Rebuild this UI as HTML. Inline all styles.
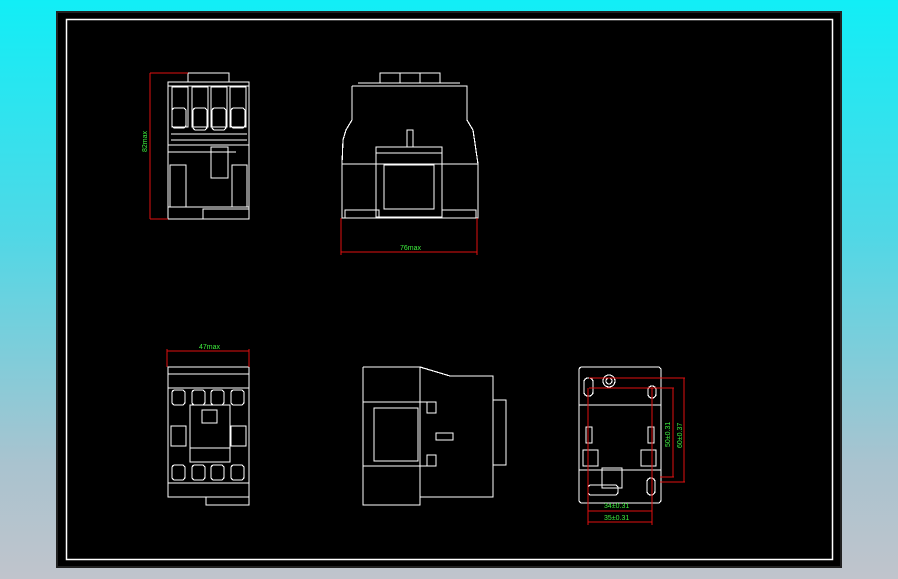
<!DOCTYPE html>
<html><head><style>
html,body{margin:0;padding:0;width:898px;height:579px;overflow:hidden}
body{background:linear-gradient(#11eef6 0%,#4fd8e6 40%,#a9c3cf 80%,#c0c4cc 100%)}
svg{position:absolute;left:0;top:0}
</style></head><body>
<svg width="898" height="579" viewBox="0 0 898 579" font-family="Liberation Sans, sans-serif">
<rect x="57" y="12" width="784" height="555" fill="#000" stroke="#222" stroke-width="2"/>
<rect x="66.5" y="19.5" width="766" height="540" fill="none" stroke="#fff" stroke-width="1.5"/>
<g fill="none" stroke="#fff" stroke-width="1.2" shape-rendering="crispEdges">
<!-- front view top-left -->
<rect x="188" y="73" width="41" height="9"/>
<rect x="168" y="82" width="81" height="137"/>
<line x1="168" y1="86" x2="249" y2="86"/>
<rect x="172" y="87" width="16" height="40"/><rect x="192" y="87" width="16" height="40"/><rect x="211" y="87" width="16" height="40"/><rect x="230" y="87" width="16" height="40"/>
<rect x="172" y="108" width="14" height="20" rx="3"/><rect x="193" y="108" width="14" height="22" rx="3"/><rect x="212" y="108" width="14" height="22" rx="3"/><rect x="231" y="108" width="14" height="20" rx="3"/>
<line x1="171" y1="134" x2="247" y2="134"/><line x1="171" y1="140" x2="247" y2="140"/>
<line x1="168" y1="145" x2="249" y2="145"/><line x1="168" y1="152" x2="236" y2="152"/>
<rect x="211" y="147" width="17" height="31"/>
<rect x="170" y="165" width="16" height="42"/><rect x="232" y="165" width="15" height="42"/>
<line x1="168" y1="207" x2="249" y2="207"/>
<rect x="203" y="209" width="46" height="10"/>
<!-- top middle view -->
<rect x="380" y="73" width="60" height="10"/>
<line x1="400" y1="73" x2="400" y2="83"/><line x1="420" y1="73" x2="420" y2="83"/>
<polyline points="352,86 352,120 346,130 343,140 342,164 342,218 478,218 478,164 473,130 467,120 467,86 352,86"/>
<line x1="358" y1="83" x2="460" y2="83"/>
<line x1="342" y1="164" x2="478" y2="164"/>
<rect x="376" y="147" width="66" height="70"/>
<rect x="384" y="165" width="50" height="44"/>
<line x1="376" y1="153" x2="442" y2="153"/>
<rect x="407" y="130" width="6" height="17"/>
<rect x="345" y="210" width="34" height="8"/><rect x="442" y="210" width="34" height="8"/>
<!-- bottom-left view -->
<rect x="168" y="367" width="81" height="130"/>
<line x1="168" y1="374" x2="249" y2="374"/><line x1="168" y1="388" x2="249" y2="388"/>
<g><rect x="172" y="390" width="13" height="15" rx="3"/><rect x="192" y="390" width="13" height="15" rx="3"/><rect x="211" y="390" width="13" height="15" rx="3"/><rect x="231" y="390" width="13" height="15" rx="3"/>
<rect x="172" y="465" width="13" height="15" rx="3"/><rect x="192" y="465" width="13" height="15" rx="3"/><rect x="211" y="465" width="13" height="15" rx="3"/><rect x="231" y="465" width="13" height="15" rx="3"/></g>
<rect x="190" y="405" width="40" height="57"/>
<line x1="190" y1="448" x2="230" y2="448"/>
<rect x="202" y="410" width="15" height="13"/>
<rect x="171" y="426" width="15" height="20"/><rect x="231" y="426" width="15" height="20"/>
<line x1="168" y1="483" x2="249" y2="483"/>
<rect x="206" y="497" width="43" height="8"/>
<!-- side view -->
<polyline points="363,367 420,367 450,376 493,376 493,497 420,497 420,505 363,505 363,367"/>
<line x1="420" y1="367" x2="420" y2="497"/>
<line x1="363" y1="402" x2="436" y2="402"/><line x1="363" y1="466" x2="436" y2="466"/>
<rect x="374" y="408" width="44" height="53"/>
<rect x="427" y="402" width="9" height="11"/><rect x="427" y="455" width="9" height="11"/>
<rect x="436" y="433" width="17" height="7"/>
<rect x="493" y="400" width="13" height="65"/>
<!-- right view -->
<rect x="579" y="367" width="82" height="136" rx="3"/>
<line x1="579" y1="405" x2="661" y2="405"/><line x1="579" y1="470" x2="661" y2="470"/>
<circle cx="609" cy="381" r="6"/><circle cx="609" cy="381" r="3"/>
<rect x="584" y="378" width="9" height="18" rx="4"/><rect x="648" y="386" width="8" height="12" rx="4"/>
<rect x="586" y="427" width="6" height="16"/><rect x="648" y="427" width="6" height="16"/>
<rect x="583" y="450" width="15" height="16"/><rect x="641" y="450" width="15" height="16"/>
<rect x="602" y="468" width="20" height="20"/>
<rect x="647" y="478" width="8" height="17" rx="4"/>
<rect x="588" y="485" width="30" height="10" rx="3"/>
</g>
<!-- red dimensions -->
<g fill="none" stroke="#e01010" stroke-width="1">
<line x1="150" y1="73" x2="150" y2="219"/><line x1="150" y1="73" x2="188" y2="73"/><line x1="150" y1="219" x2="168" y2="219"/>
<line x1="341" y1="252" x2="477" y2="252"/><line x1="341" y1="218" x2="341" y2="255"/><line x1="477" y1="218" x2="477" y2="255"/>
<line x1="167" y1="351" x2="249" y2="351"/><line x1="167" y1="349" x2="167" y2="367"/><line x1="249" y1="349" x2="249" y2="367"/>
<line x1="589" y1="378" x2="685" y2="378"/><line x1="589" y1="388" x2="674" y2="388"/>
<line x1="660" y1="482" x2="685" y2="482"/><line x1="660" y1="477" x2="674" y2="477"/>
<line x1="684" y1="378" x2="684" y2="482"/><line x1="673" y1="388" x2="673" y2="477"/>
<line x1="588" y1="388" x2="588" y2="525"/><line x1="652" y1="388" x2="652" y2="525"/>
<line x1="588" y1="511" x2="652" y2="511"/><line x1="588" y1="522" x2="652" y2="522"/>
</g>
<g fill="#3ef03e" font-size="7">
<text x="147" y="152" transform="rotate(-90 147 152)">82max</text>
<text x="400" y="250">76max</text>
<text x="199" y="349">47max</text>
<text x="604" y="508">34±0.31</text>
<text x="604" y="520">35±0.31</text>
<text x="670" y="447" transform="rotate(-90 670 447)">50±0.31</text>
<text x="682" y="448" transform="rotate(-90 682 448)">60±0.37</text>
</g>
</svg>
</body></html>
